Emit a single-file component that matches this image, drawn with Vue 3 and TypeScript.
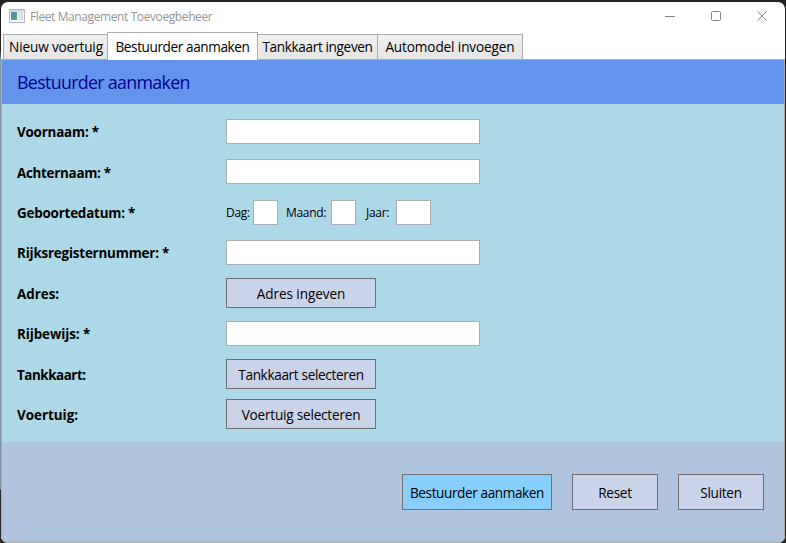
<script setup lang="ts">
import { ref } from 'vue'

interface Tab {
  id: string
  label: string
}

interface Field {
  id: string
  label: string
  kind: 'text' | 'date' | 'button'
  action?: string
}

const tabs: Tab[] = [
  { id: 'vehicle', label: 'Nieuw voertuig' },
  { id: 'driver', label: 'Bestuurder aanmaken' },
  { id: 'fuelcard', label: 'Tankkaart ingeven' },
  { id: 'model', label: 'Automodel invoegen' },
]

const fields: Field[] = [
  { id: 'voornaam', label: 'Voornaam: *', kind: 'text' },
  { id: 'achternaam', label: 'Achternaam: *', kind: 'text' },
  { id: 'geboortedatum', label: 'Geboortedatum: *', kind: 'date' },
  { id: 'rijksregister', label: 'Rijksregisternummer: *', kind: 'text' },
  { id: 'adres', label: 'Adres:', kind: 'button', action: 'Adres ingeven' },
  { id: 'rijbewijs', label: 'Rijbewijs: *', kind: 'text' },
  { id: 'tankkaart', label: 'Tankkaart:', kind: 'button', action: 'Tankkaart selecteren' },
  { id: 'voertuig', label: 'Voertuig:', kind: 'button', action: 'Voertuig selecteren' },
]

const activeTab = ref('driver')
const values = ref<Record<string, string>>({})

function reset(): void {
  values.value = {}
}
</script>

<template>
  <div class="desktop">
    <div class="window">
      <header class="titlebar">
        <svg class="app-icon" width="16" height="14" viewBox="0 0 16 14">
          <defs>
            <linearGradient id="pane" x1="0" y1="0" x2="1" y2="1">
              <stop offset="0" stop-color="#4a86b8" />
              <stop offset="1" stop-color="#58a878" />
            </linearGradient>
          </defs>
          <rect x="0.5" y="0.5" width="15" height="13" fill="#f4f5f6" stroke="#b4b8bd" />
          <rect x="1" y="1" width="14" height="1.5" fill="#d0d4da" />
          <rect x="2" y="3" width="6" height="8" fill="url(#pane)" />
          <rect x="9" y="3" width="2.5" height="8" fill="#e3e6e8" />
          <rect x="12" y="3" width="2" height="8" fill="#d3dbd8" />
        </svg>
        <span class="title">Fleet Management Toevoegbeheer</span>
        <div class="controls">
          <svg width="10" height="10" viewBox="0 0 10 10"><path d="M0 5.5H10" /></svg>
          <svg width="10" height="10" viewBox="0 0 10 10"><rect x="0.5" y="0.5" width="9" height="9" rx="1" /></svg>
          <svg width="10" height="10" viewBox="0 0 10 10"><path d="M0.3 0.3L9.7 9.7M9.7 0.3L0.3 9.7" /></svg>
        </div>
      </header>

      <nav class="tabs">
        <button
          v-for="tab in tabs"
          :key="tab.id"
          class="tab"
          :class="[tab.id, { active: tab.id === activeTab }]"
          @click="activeTab = tab.id"
        >{{ tab.label }}</button>
      </nav>

      <main class="page">
        <h1 class="heading"><span>Bestuurder aanmaken</span></h1>

        <form class="form" @submit.prevent>
          <template v-for="field in fields" :key="field.id">
            <label class="label" :class="field.id">{{ field.label }}</label>
            <input v-if="field.kind === 'text'" v-model="values[field.id]" class="box" type="text" />
            <div v-else-if="field.kind === 'date'" class="date">
              <span class="dag">Dag:</span><input v-model="values.dag" class="box small" type="text" />
              <span class="maand">Maand:</span><input v-model="values.maand" class="box small" type="text" />
              <span class="jaar">Jaar:</span><input v-model="values.jaar" class="box year" type="text" />
            </div>
            <button v-else class="btn pick" :class="`pick-${field.id}`" type="button">{{ field.action }}</button>
          </template>
        </form>

        <footer class="actions">
          <button class="btn primary">Bestuurder aanmaken</button>
          <button class="btn" @click="reset">Reset</button>
          <button class="btn">Sluiten</button>
        </footer>
      </main>
    </div>
  </div>
</template>

<style>
body {
  margin: 0;
  overflow: hidden;
}
</style>

<style scoped>
* {
  box-sizing: border-box;
}

.desktop {
  width: 786px;
  height: 543px;
  padding: 2px 1px 0;
  background: linear-gradient(#231f20 0 50px, #8497a0 60px 489px, #2c2c2c 490px) 0 0 / 1px 100% no-repeat, #252324;
  font-family: "Open Sans", "Noto Sans", sans-serif;
  color: #000;
}

.window {
  display: flex;
  flex-direction: column;
  height: 541px;
  overflow: hidden;
  border-radius: 7px;
  background: #fff;
}

.titlebar {
  display: flex;
  align-items: center;
  height: 30px;
  padding: 0 18px 0 8px;
}

.app-icon {
  margin-top: -2px;
}

.title {
  margin: -1px 0 0 5px;
  font-size: 12px;
  letter-spacing: -0.4px;
  color: #969696;
}

.controls {
  display: flex;
  gap: 36px;
  margin-left: auto;
  margin-top: -2px;
}

.controls svg {
  fill: none;
  stroke: #868686;
  stroke-width: 1;
}

.tabs {
  display: flex;
  align-items: flex-end;
  height: 27px;
  padding-left: 2px;
  flex: none;
}

.tab {
  height: 26px;
  margin: 0 0 -1px;
  padding: 0 0 2px;
  border: 1px solid #acacac;
  background: linear-gradient(#f0f0f0, #e5e5e5);
  font: 13.6px "Open Sans", "Noto Sans", sans-serif;
  white-space: nowrap;
  color: #000;
}

.vehicle {
  width: 105px;
  padding-left: 1px;
  letter-spacing: -0.15px;
}

.driver {
  width: 151px;
  letter-spacing: -0.4px;
}

.fuelcard {
  width: 121px;
  margin-left: -1px;
  letter-spacing: -0.36px;
}

.model {
  width: 146px;
  margin-left: -1px;
  letter-spacing: -0.12px;
}

.tab.active {
  position: relative;
  z-index: 1;
  height: 28px;
  margin-left: -1px;
  padding-bottom: 0;
  border-bottom: 0;
  background: #fff;
}

.page {
  display: flex;
  flex-direction: column;
  flex: 1;
  border: 1px solid #acacac;
  border-radius: 0 0 7px 7px;
  overflow: hidden;
  background: #b0c4de;
}

.heading {
  display: flex;
  align-items: center;
  flex: none;
  height: 44px;
  margin: 0;
  padding: 0 0 0 15px;
  background: #6495ed;
  color: #00008b;
  font-size: 17.8px;
  font-weight: 400;
  letter-spacing: -0.66px;
}

.form {
  display: grid;
  grid-template-columns: 209px 1fr;
  grid-template-rows: 39px 41px 41px 39px 42px 39px 42px 38px;
  align-items: center;
  justify-items: start;
  flex: none;
  height: 338px;
  padding: 8px 0 0 15px;
  background: #add8e6;
}

.label {
  font-size: 13.4px;
  font-weight: 700;
  line-height: 20px;
  letter-spacing: -0.2px;
}

.label.achternaam {
  letter-spacing: -0.28px;
}

.label.rijbewijs {
  letter-spacing: -0.1px;
}

.label.tankkaart {
  letter-spacing: -0.45px;
}

.label.adres,
.label.voertuig {
  letter-spacing: 0;
}

.label.achternaam,
.label.adres,
.label.tankkaart,
.label.voertuig {
  padding-top: 2px;
}

.box {
  width: 254px;
  height: 25px;
  padding: 0 3px;
  border: 1px solid #abadb3;
  border-radius: 0;
  background: #fff;
  outline: none;
}

.date {
  display: flex;
  align-items: center;
  font-size: 12px;
  letter-spacing: -0.3px;
}

.date .dag {
  width: 27px;
}

.date .maand {
  width: 45px;
  margin-left: 8px;
}

.date .jaar {
  width: 30px;
  margin-left: 10px;
}

.box.small {
  width: 25px;
}

.box.year {
  width: 35px;
}

.btn {
  width: 86px;
  height: 36px;
  padding: 0;
  border: 1px solid #707070;
  border-radius: 0;
  background: #cad4e9;
  color: #000;
  font: 13.6px "Open Sans", "Noto Sans", sans-serif;
  letter-spacing: -0.3px;
  white-space: nowrap;
}

.btn.pick {
  width: 150px;
  height: 30px;
}

.btn.pick-adres {
  letter-spacing: -0.1px;
}

.btn.pick-tankkaart {
  letter-spacing: -0.35px;
}

.btn.pick-voertuig {
  letter-spacing: -0.22px;
}

.btn.primary {
  width: 150px;
  background: #87cefa;
  letter-spacing: -0.4px;
}

.actions {
  display: flex;
  justify-content: flex-end;
  gap: 20px;
  padding: 32px 20px 0 0;
}
</style>
